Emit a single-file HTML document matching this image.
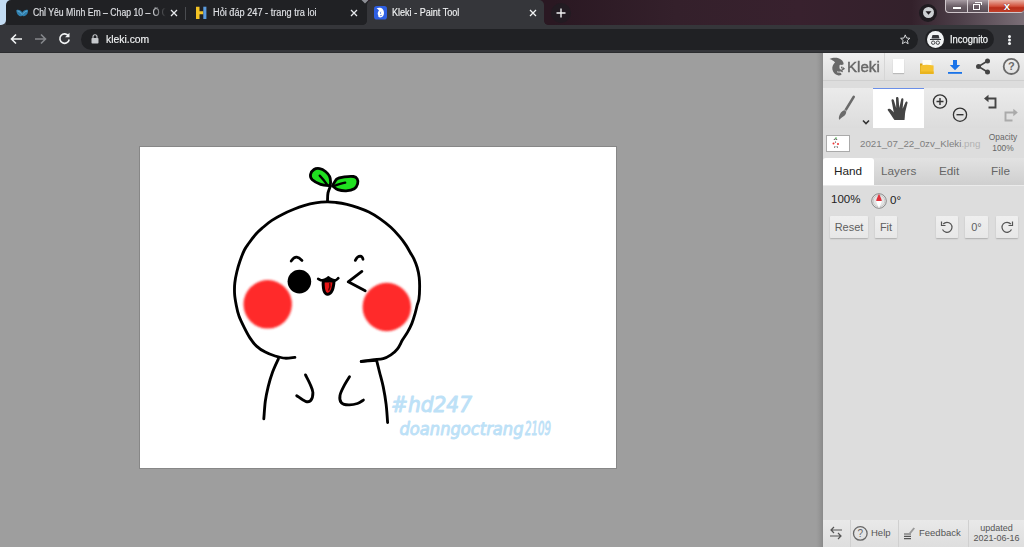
<!DOCTYPE html>
<html lang="en">
<head>
<meta charset="utf-8">
<title>Kleki - Paint Tool</title>
<style>
html,body{margin:0;padding:0;}
body{width:1024px;height:547px;overflow:hidden;position:relative;background:#9e9e9e;font-family:"Liberation Sans",sans-serif;}
.abs{position:absolute;}
#frame{left:0;top:0;width:1024px;height:26px;background:linear-gradient(90deg,#2a1822 0%,#2a1822 54%,#34202b 66%,#38212e 78%,#33212b 89%,#4f414b 94%,#7b6f77 100%);}
#blueback{left:0;top:0;width:12px;height:14px;background:#c3dcf3;}
#frameblue{left:0;top:0;width:6px;height:25px;background:#c3dcf3;border-radius:0 0 5px 0;}
#tabsdark{left:6px;top:0;width:362px;height:26px;background:#202124;border-radius:5px 0 0 0;}
#tabactive{left:367px;top:0;width:177px;height:26px;background:#35363a;border-radius:5px 5px 0 0;}
#flareL{left:363px;top:21px;width:4px;height:4px;background:radial-gradient(circle at 0 0,rgba(53,54,58,0) 3.500px,#35363a 4.200px);}
#flareR{left:544px;top:21px;width:4px;height:4px;background:radial-gradient(circle at 100% 0,rgba(53,54,58,0) 3.500px,#35363a 4.200px);}
#toolbar{left:0;top:25px;width:1024px;height:27px;background:#35363a;}
#tbcorner{left:0;top:15px;width:7px;height:11px;background:#35363a;}
#tbline{left:0;top:52px;width:1024px;height:1px;background:#2b2c2f;}
#omni{left:81px;top:29px;width:837px;height:21px;border-radius:11px;background:#202124;}
.tabtitle{font-size:10px;line-height:12px;color:#dfe1e5;top:7px;white-space:nowrap;transform-origin:0 0;-webkit-text-stroke:0.150px currentColor;}
.tabx{color:#e8eaed;font-size:9px;top:6px;}
#panel{left:823px;top:53px;width:201px;height:494px;background:#dddddd;}
#panelborder{left:816px;top:53px;width:7px;height:494px;background:linear-gradient(90deg,rgba(0,0,0,0),rgba(0,0,0,0.040) 40%,rgba(0,0,0,0.130));}
#hdr{left:823px;top:53px;width:201px;height:27px;background:linear-gradient(#f0f0f0,#dfdfdf);border-bottom:1px solid #cfcfcf;}
#toolrow{left:823px;top:88px;width:201px;height:40px;background:linear-gradient(#ebebeb,#dcdcdc);}
#handtile{left:873px;top:88px;width:51px;height:40px;background:#fff;border-top:1px solid #6b8fe8;box-sizing:border-box;}
#tabrow{left:823px;top:158px;width:201px;height:27px;background:linear-gradient(#e2e2e2,#cfcfcf);border-bottom:1px solid #ebebeb;}
#tabhand{left:823px;top:158px;width:51px;height:27px;background:#fff;border-radius:3px 3px 0 0;}
.ptab{font-size:11.75px;color:#666;top:164px;}
.btn{height:22px;top:216px;background:linear-gradient(#efefef,#e7e7e7);border-radius:1px;box-shadow:0 1px 1.500px rgba(0,0,0,0.220);font-size:11px;color:#5e5e5e;text-align:center;line-height:22px;}
#footer{left:823px;top:520px;width:201px;height:27px;background:linear-gradient(#e9e9e9,#dedede);}
.fsep{top:520px;width:1px;height:27px;background:#d0d0d0;}
.ftxt{font-size:9.5px;color:#555;}
#canvas{left:140px;top:147px;width:476px;height:321px;background:#fff;box-shadow:0 0 0 1px rgba(0,0,0,0.140);}
</style>
</head>
<body>
<!-- chrome frame -->
<div id="frame" class="abs"></div>
<div id="blueback" class="abs"></div>
<div id="tbcorner" class="abs"></div>
<div id="frameblue" class="abs"></div>
<div id="tabsdark" class="abs"></div>
<div id="tabactive" class="abs"></div>
<div id="flareL" class="abs"></div>
<div id="flareR" class="abs"></div>
<svg class="abs" style="left:361px;top:0" width="8" height="4" viewBox="0 0 8 4"><path d="M0.500 0 H7.500 L4 3.500Z" fill="#a9abb3" opacity="0.800"/></svg>
<div id="toolbar" class="abs"></div>
<div id="tbline" class="abs"></div>
<div id="omni" class="abs"></div>

<!-- tab 1 -->
<svg class="abs" style="left:15.500px;top:8.500px" width="12.500" height="8" viewBox="0 0 12.500 8"><path d="M0.300 1.200 C2.500 0.300 5 1.300 6.250 3.600 C7.500 1.300 10 0.300 12.200 1.200 C12 4.800 10 7.300 7.300 7.300 C6.800 7.300 6.500 7 6.250 6.600 C6 7 5.700 7.300 5.200 7.300 C2.500 7.300 0.500 4.800 0.300 1.200Z" fill="#2f7fae"/><path d="M1.500 2 C3.500 2.300 5 3.800 5.800 5.500 M11 2 C9 2.300 7.500 3.800 6.700 5.500" stroke="#6db5dc" stroke-width="0.900" fill="none"/></svg>
<div class="abs tabtitle" style="left:32.500px;width:154px;overflow:hidden;transform:scaleX(0.866);">Chỉ Yêu Mình Em – Chap 10 – Ổ Q</div>
<div class="abs" style="left:153px;top:4px;width:14px;height:18px;background:linear-gradient(90deg,rgba(32,33,36,0),#202124 90%);"></div>
<svg class="abs" style="left:170px;top:9px" width="8" height="8" viewBox="0 0 8 8"><path d="M1 1 L7 7 M7 1 L1 7" stroke="#e8eaed" stroke-width="1.3" fill="none"/></svg>
<div class="abs" style="left:185px;top:7px;width:1px;height:13px;background:#4a4c50;"></div>
<!-- tab 2 -->
<svg class="abs" style="left:195px;top:6px" width="13" height="14" viewBox="0 0 13 14"><path d="M1 0.700 H4.500 V5.300 H8.300 V8.300 H4.500 V13 H1Z" fill="#f3c324"/><path d="M8.300 0.700 H11.400 V13 H8.300Z" fill="#5b9bdf"/></svg>
<div class="abs tabtitle" style="left:212.500px;transform:scaleX(0.918);">Hỏi đáp 247 - trang tra loi</div>
<svg class="abs" style="left:350px;top:9px" width="8" height="8" viewBox="0 0 8 8"><path d="M1 1 L7 7 M7 1 L1 7" stroke="#e8eaed" stroke-width="1.3" fill="none"/></svg>
<!-- tab 3 active -->
<svg class="abs" style="left:373.500px;top:6px" width="13" height="13.500" viewBox="0 0 13 13.500"><rect x="0" y="0" width="13" height="13.500" rx="2.800" fill="#2e5fe3"/><path d="M2.500 2.300 C4.500 1.300 7.500 1.500 8.800 3.200 C10 4.800 10.300 7 9.700 8.800 C9.100 10.500 7.800 11.600 6.200 11.600 C4.800 11.600 4 10.600 4.300 9.600 C3.300 8.200 3.600 6 5 4.600 C4.400 3.600 3.500 2.800 2.500 2.300Z" fill="#fff"/><path d="M6.900 5.800 C6.300 6.500 6.300 7.500 6.900 8 M6 9.600 C6.800 9.900 7.500 9.700 7.900 9.200" stroke="#2e5fe3" stroke-width="0.700" fill="none"/></svg>
<div class="abs tabtitle" style="left:392px;color:#f1f3f4;transform:scaleX(0.906);">Kleki - Paint Tool</div>
<svg class="abs" style="left:529px;top:9px" width="8" height="8" viewBox="0 0 8 8"><path d="M1 1 L7 7 M7 1 L1 7" stroke="#f1f3f4" stroke-width="1.3" fill="none"/></svg>
<!-- new tab + -->
<div class="abs" style="left:551px;top:3px;width:20px;height:20px;border-radius:10px;background:#221b22;"></div>
<svg class="abs" style="left:556px;top:8px" width="10" height="10" viewBox="0 0 10 10"><path d="M5 0.5 V9.5 M0.5 5 H9.500" stroke="#f1f3f4" stroke-width="1.4" fill="none"/></svg>
<!-- tab search -->
<div class="abs" style="left:919px;top:4px;width:18px;height:18px;border-radius:9px;background:#1f1b20;"></div>
<div class="abs" style="left:923px;top:7px;width:11px;height:11px;border-radius:6px;background:#cdd0d3;"></div>
<svg class="abs" style="left:925px;top:11px" width="7" height="4" viewBox="0 0 7 4"><path d="M0.500 0.300 H6.500 L3.500 3.700Z" fill="#1f1b20"/></svg>
<!-- window buttons -->
<div class="abs" style="left:945px;top:0;width:79px;height:13px;border-radius:0 0 4px 4px;border:1px solid #cfc6cb;border-top:none;border-right:none;box-sizing:border-box;background:linear-gradient(#a79ca3,#6e626a 50%,#5a4e57);overflow:hidden;">
  <div class="abs" style="left:21px;top:0;width:1px;height:14px;background:#d6cfd3;"></div>
  <div class="abs" style="left:42px;top:0;width:1px;height:14px;background:#d6cfd3;"></div>
  <div class="abs" style="left:43px;top:0;width:36px;height:14px;background:linear-gradient(#e9b3a6,#d2513c 45%,#b92d19 55%,#c64a33);"></div>
  <div class="abs" style="left:7px;top:6.500px;width:8px;height:2.500px;background:#fff;box-shadow:0 0 1px #333;"></div>
  <div class="abs" style="left:27px;top:3.500px;width:7px;height:6.500px;border:1.500px solid #fff;box-sizing:border-box;box-shadow:0 0 1px #333;"></div>
  <div class="abs" style="left:29px;top:1.500px;width:7px;height:3px;border:1px solid #fff;border-bottom:none;border-left:none;box-sizing:border-box;"></div>
  <div class="abs" style="left:54px;top:-1.500px;width:14px;height:14px;color:#fff;font-size:11.500px;font-weight:bold;line-height:14px;text-align:center;text-shadow:0 0 1px #400;">x</div>
</div>

<!-- toolbar icons -->
<svg class="abs" style="left:10px;top:33px" width="13" height="12" viewBox="0 0 13 12"><path d="M12 6 H2 M6 1.500 L1.500 6 L6 10.500" stroke="#f1f3f4" stroke-width="1.6" fill="none"/></svg>
<svg class="abs" style="left:34px;top:33px" width="13" height="12" viewBox="0 0 13 12"><path d="M1 6 H11 M7 1.500 L11.500 6 L7 10.500" stroke="#85878b" stroke-width="1.6" fill="none"/></svg>
<svg class="abs" style="left:58px;top:32px" width="13" height="13" viewBox="0 0 13 13"><path d="M10.500 4 A4.700 4.700 0 1 0 11.200 7.500" stroke="#f1f3f4" stroke-width="1.6" fill="none"/><path d="M11.500 0.800 V5.200 H7.100Z" fill="#f1f3f4"/></svg>
<svg class="abs" style="left:91px;top:34px" width="8" height="10" viewBox="0 0 8 10"><rect x="0.500" y="4" width="7" height="5.500" rx="0.800" fill="#c6c9cc"/><path d="M2 4 V2.800 A2 2 0 0 1 6 2.800 V4" stroke="#c6c9cc" stroke-width="1.100" fill="none"/></svg>
<div class="abs" style="left:106px;top:32.500px;font-size:11.300px;line-height:13px;color:#f1f3f4;transform-origin:0 0;transform:scaleX(0.918);-webkit-text-stroke:0.150px #f1f3f4;">kleki.com</div>
<svg class="abs" style="left:900px;top:34.300px" width="10.500" height="10.500" viewBox="0 0 12 12"><path d="M6 1 L7.500 4.600 L11.300 4.900 L8.400 7.400 L9.300 11.100 L6 9.100 L2.700 11.100 L3.600 7.400 L0.700 4.900 L4.500 4.600Z" stroke="#e8eaed" stroke-width="1" fill="none" stroke-linejoin="round"/></svg>
<div class="abs" style="left:925px;top:29px;width:69px;height:20px;border-radius:11px;background:#202124;"></div>
<div class="abs" style="left:927px;top:31px;width:17px;height:17px;border-radius:9px;background:#f1f3f4;"></div>
<svg class="abs" style="left:929px;top:34px" width="13" height="12" viewBox="0 0 13 12"><path d="M3.500 1 H9.500 L10.500 4.500 H2.500Z M1 5 H12 V6 H1Z" fill="#35363a"/><circle cx="4.200" cy="8.700" r="1.700" stroke="#35363a" stroke-width="0.900" fill="none"/><circle cx="8.800" cy="8.700" r="1.700" stroke="#35363a" stroke-width="0.900" fill="none"/></svg>
<div class="abs" style="left:949.500px;top:33.500px;font-size:10px;line-height:12px;color:#f1f3f4;transform-origin:0 0;transform:scaleX(0.937);-webkit-text-stroke:0.250px #f1f3f4;">Incognito</div>
<div class="abs" style="left:1008px;top:35px;width:3px;height:3px;border-radius:2px;background:#f1f3f4;box-shadow:0 3.500px 0 #f1f3f4,0 7px 0 #f1f3f4;"></div>

<!-- canvas area -->
<div id="canvas" class="abs"></div>
<svg class="abs" style="left:140px;top:147px" width="476" height="320" viewBox="140 147 476 320">
<defs><filter id="blur" x="-20%" y="-20%" width="140%" height="140%"><feGaussianBlur stdDeviation="1.300"/></filter></defs>
<!-- cheeks -->
<circle cx="267.700" cy="304.300" r="24.200" fill="#ff2a2a" filter="url(#blur)"/>
<circle cx="386.800" cy="307" r="24.200" fill="#ff2a2a" filter="url(#blur)"/>
<g fill="none" stroke="#000" stroke-width="2.850" stroke-linecap="round" stroke-linejoin="round">
<!-- head -->
<path d="M294.9 357.4 C293.2 357.5 288.3 358.4 285.0 358.2 C281.7 358.0 278.4 357.0 275.1 356.0 C271.8 355.0 268.4 353.8 265.3 352.1 C262.2 350.5 259.1 348.5 256.5 346.1 C253.9 343.7 252.0 341.1 249.9 337.9 C247.8 334.7 245.7 330.5 243.9 326.9 C242.1 323.2 240.3 319.6 239.0 316.0 C237.7 312.4 236.9 308.7 236.2 305.0 C235.5 301.3 234.8 297.7 234.6 294.0 C234.4 290.3 234.4 286.7 234.8 283.0 C235.2 279.3 235.9 275.7 236.8 272.0 C237.7 268.3 238.7 264.7 240.0 261.0 C241.3 257.3 242.9 253.0 244.4 250.0 C245.9 247.0 247.1 245.7 249.0 243.0 C250.9 240.3 253.6 236.7 256.0 234.0 C258.4 231.3 260.9 229.3 263.5 227.0 C266.1 224.7 268.7 222.5 271.9 220.4 C275.1 218.3 279.1 216.0 282.8 214.2 C286.5 212.3 290.1 210.8 293.8 209.3 C297.5 207.8 301.2 206.5 304.8 205.4 C308.4 204.3 312.0 203.5 315.7 202.9 C319.4 202.3 323.6 202.0 327.0 201.9 C330.4 201.8 332.7 202.1 336.0 202.5 C339.3 202.9 343.2 203.5 346.9 204.3 C350.5 205.2 354.2 206.3 357.9 207.6 C361.6 208.9 365.2 210.2 368.9 212.0 C372.5 213.8 376.1 216.0 379.8 218.6 C383.5 221.2 387.5 224.3 390.8 227.3 C394.1 230.3 397.1 233.7 399.6 236.7 C402.2 239.7 404.3 242.7 406.1 245.4 C407.9 248.1 409.2 250.8 410.5 253.0 C411.8 255.2 412.8 256.4 413.9 258.8 C415.0 261.2 416.3 264.4 417.2 267.5 C418.1 270.6 418.8 273.9 419.2 277.4 C419.6 280.9 419.7 284.8 419.6 288.4 C419.6 292.0 419.3 296.5 418.9 299.3 C418.5 302.1 417.8 302.6 417.2 305.0 C416.6 307.4 415.9 310.7 415.0 313.8 C414.1 316.9 413.1 320.5 411.8 323.6 C410.5 326.7 409.0 329.6 407.4 332.4 C405.8 335.1 404.0 337.4 402.4 340.1 C400.8 342.9 399.4 346.4 397.5 348.9 C395.6 351.4 393.3 353.3 390.9 354.9 C388.5 356.5 386.3 357.9 383.2 358.7 C380.1 359.5 375.9 359.3 372.3 359.8 C368.7 360.3 363.1 361.2 361.3 361.5"/>
<!-- body -->
<path d="M278.4 358.8 C277.4 361.0 274.3 367.4 272.6 372.0 C270.9 376.6 269.4 381.7 268.2 386.6 C267.0 391.5 266.0 395.9 265.3 401.3 C264.6 406.7 264.1 415.9 263.8 418.8"/>
<path d="M361.200 361.400 L376.600 360.300"/>
<path d="M376.6 360.3 C377.1 362.2 378.4 367.6 379.5 372.0 C380.6 376.4 382.1 381.2 383.2 386.6 C384.3 392.0 385.4 398.2 386.1 404.2 C386.8 410.2 387.4 419.4 387.6 422.5"/>
<path d="M305.5 374.9 C306.2 376.4 308.7 380.8 309.9 383.7 C311.1 386.6 312.8 389.7 312.9 392.5 C313.0 395.3 311.9 399.0 310.7 400.5 C309.5 402.0 307.8 402.1 305.5 401.3 C303.2 400.5 298.2 396.6 296.7 395.7"/>
<path d="M349.5 376.7 C348.6 378.1 346.0 382.1 344.4 385.2 C342.8 388.3 340.5 392.5 340.0 395.4 C339.5 398.3 339.9 401.1 341.4 402.7 C342.8 404.3 346.0 404.8 348.7 404.9 C351.4 405.0 355.1 404.3 357.5 403.5 C359.9 402.7 362.4 400.7 363.4 400.1"/>
<!-- stem -->
<path d="M330.4 186.3 C330.0 187.4 328.5 190.5 328.0 192.9 C327.5 195.3 327.6 199.7 327.5 201.0"/>
</g>
<!-- leaves -->
<g stroke="#000" stroke-width="2.800" stroke-linejoin="round" fill="#20e020">
<path d="M330.0 185.8 C328.4 185.6 323.6 185.3 320.6 184.3 C317.7 183.3 314.0 181.3 312.3 179.7 C310.6 178.0 310.2 176.1 310.5 174.4 C310.8 172.7 312.5 170.5 314.0 169.5 C315.5 168.5 317.8 168.3 319.7 168.6 C321.6 168.9 323.9 170.2 325.5 171.5 C327.1 172.8 328.8 174.7 329.6 176.5 C330.5 178.3 330.5 180.6 330.6 182.2 C330.7 183.8 330.1 185.2 330.0 185.8Z"/>
<path d="M332.5 185.8 C333.2 184.7 335.0 180.4 337.0 178.9 C339.0 177.4 341.6 177.3 344.4 176.9 C347.1 176.5 351.4 176.2 353.5 176.5 C355.6 176.8 356.5 177.7 357.2 178.9 C357.9 180.1 358.1 182.2 357.6 183.9 C357.1 185.6 356.2 187.7 354.3 188.8 C352.4 190.0 348.9 190.7 346.1 190.8 C343.4 190.9 340.1 190.4 337.8 189.6 C335.5 188.8 333.4 186.4 332.5 185.8Z"/>
</g>
<g fill="none" stroke="#000" stroke-width="2.300" stroke-linecap="round">
<path d="M319.700 175.600 C322 178 325 181.500 327.100 184.700"/>
<path d="M333.500 186.200 C337 184.800 341 183.200 345.200 182.600"/>
</g>
<!-- face -->
<g fill="none" stroke="#000" stroke-width="2.800" stroke-linecap="round" stroke-linejoin="round">
<path d="M291.200 261 C293 258.500 295 257 296.700 257.200 C298.500 257.500 300.500 259 302 260.400"/>
<path d="M355.300 260.400 C356.500 258 358.500 256.200 360.200 256.200 C361.800 256.300 362.700 257.800 363 259.300"/>
<path d="M361.900 271.400 L348.200 281.800 L365.200 290.800"/>
</g>
<circle cx="299.400" cy="281.600" r="11.800" fill="#000"/>
<path d="M323.3 280.4 C323.3 281.2 323.1 283.4 323.2 285.0 C323.3 286.6 323.5 288.9 323.9 290.3 C324.3 291.7 325.0 292.8 325.7 293.5 C326.4 294.2 327.1 294.4 327.9 294.3 C328.6 294.2 329.4 293.9 330.2 293.2 C330.9 292.5 331.8 291.3 332.4 289.9 C333.0 288.5 333.3 286.5 333.6 285.0 C333.9 283.5 333.9 281.4 334.0 280.7Z" fill="#e61616" stroke="#000" stroke-width="3" stroke-linejoin="round"/>
<path d="M322.500 280.500 L326.200 278.700 L328.400 277.500 L330.600 278.700 L334.500 280.700 L334 282.300 L323 282.300Z" fill="#000"/>
<path d="M329.800 283.500 C330.200 285.500 329.800 288 328.800 290" stroke="#5a0000" stroke-width="1.500" stroke-linecap="round" fill="none"/>
<g fill="none" stroke="#000" stroke-width="2.700" stroke-linecap="round" stroke-linejoin="round">
<path d="M318.2 278.9 C318.6 279.1 319.8 280.0 320.7 280.2 C321.6 280.4 322.6 280.2 323.5 280.0 C324.4 279.8 325.4 279.3 326.2 278.9 C327.0 278.5 328.0 277.8 328.4 277.6"/>
<path d="M328.4 277.6 C328.8 277.8 329.8 278.5 330.6 278.9 C331.4 279.3 332.1 279.8 333.0 280.0 C333.9 280.2 334.8 280.5 335.7 280.2 C336.6 279.9 337.9 278.5 338.3 278.2"/>
</g>
<!-- handwritten tag -->
<g font-family="'DejaVu Sans Condensed','DejaVu Sans','Liberation Sans',sans-serif" font-style="italic" fill="#bde1f7" stroke="#bde1f7" stroke-width="0.900" stroke-linejoin="round">
<text x="391" y="411.500" font-size="21" textLength="81" lengthAdjust="spacingAndGlyphs">#hd247</text>
<text x="399.500" y="434.500" font-size="18" textLength="124" lengthAdjust="spacingAndGlyphs">doanngoctrang</text>
<text x="525" y="434.500" font-size="19" textLength="26" lengthAdjust="spacingAndGlyphs">2109</text>
</g>
</svg>

<!-- panel -->
<div id="panelborder" class="abs"></div>
<div id="panel" class="abs"></div>
<div id="hdr" class="abs"></div>
<div id="toolrow" class="abs"></div>
<div id="handtile" class="abs"></div>
<div id="tabrow" class="abs"></div>
<div id="tabhand" class="abs"></div>
<div id="footer" class="abs"></div>

<!-- header: logo -->
<svg class="abs" style="left:829px;top:57px" width="17" height="19.500" viewBox="0 0 17 19.500"><path d="M0.500 2 C3 0.800 6.500 0.500 9.500 1.200 C12.500 2 14.600 4.500 14.700 7.200 C13.600 7.500 12.600 8.200 12.300 9.300 C13.600 9.600 15.200 10.600 16 11.800 C15.200 12.600 14.300 13 13.400 13.200 C13.900 13.800 14 14.600 13.700 15.200 C12.600 15 11.300 14.800 10.200 15 C11.400 15.600 12.400 16.500 12.600 17.600 C11.600 18.400 10 18.700 8.800 18.300 C6 17.600 4 15.200 3.400 12.500 C2.900 9.800 4 7.200 6 5.400 C4.800 4 2.800 2.600 0.500 2Z" fill="#686868"/><path d="M10.800 8.200 C11.800 7.600 13 7.800 13.400 8.800 C13.800 10 13.600 11.600 12.800 12.600 C11.800 12.800 10.800 12.200 10.500 11 C10.300 10 10.400 9 10.800 8.200Z" fill="#e6e6e6"/><ellipse cx="12.600" cy="10.400" rx="0.650" ry="1" fill="#686868"/><path d="M8 14.800 C9.500 15.300 11 15.200 12.200 14.600" stroke="#e6e6e6" stroke-width="0.900" fill="none"/></svg>
<div class="abs" style="left:846.800px;top:57px;font-size:15.200px;color:#686868;line-height:20px;transform-origin:0 0;transform:scaleX(0.995);-webkit-text-stroke:0.450px #686868;">Kleki</div>
<div class="abs" style="left:884px;top:53px;width:1px;height:27px;background:#d6d6d6;"></div>
<!-- new -->
<div class="abs" style="left:893px;top:59px;width:11px;height:14px;background:#fff;box-shadow:0 1px 1px rgba(0,0,0,0.18);"></div>
<!-- folder -->
<svg class="abs" style="left:919px;top:59px" width="16" height="16" viewBox="0 0 16 16"><path d="M1 4.500 H4.500 V14.500 H1Z" fill="#d6a312"/><path d="M3.500 1 H12.500 V9 H3.500Z" fill="#fffdf2"/><path d="M1.500 6.500 C5 5.600 10 5.600 14.600 6.500 V14.800 H1.500Z" fill="#f5c22e"/><path d="M1 12.500 H14.600 V15 H1Z" fill="#e9b41e"/></svg>
<!-- download -->
<svg class="abs" style="left:947px;top:59px" width="16" height="16" viewBox="0 0 16 16"><path d="M6 1 H10 V6 H13.200 L8 11.300 L2.800 6 H6Z" fill="#1a73e8"/><rect x="1" y="13" width="14" height="1.800" fill="#1a73e8"/></svg>
<!-- share -->
<svg class="abs" style="left:975px;top:58px" width="16" height="17" viewBox="0 0 16 17"><path d="M12.500 3 L3.500 8.500 L12.500 14" stroke="#444" stroke-width="1.600" fill="none"/><circle cx="12.500" cy="3" r="2.500" fill="#444"/><circle cx="3.500" cy="8.500" r="2.500" fill="#444"/><circle cx="12.500" cy="14" r="2.500" fill="#444"/></svg>
<!-- help -->
<svg class="abs" style="left:1002px;top:57px" width="19" height="19" viewBox="0 0 19 19"><circle cx="9.300" cy="9.400" r="7.600" stroke="#6a6a6a" stroke-width="1.800" fill="none"/><text x="9.300" y="13.400" font-family="Liberation Sans, sans-serif" font-size="11" font-weight="bold" fill="#6a6a6a" text-anchor="middle">?</text></svg>

<!-- tool row: brush -->
<svg class="abs" style="left:836px;top:94px" width="22" height="28" viewBox="0 0 22 28"><path d="M17.700 2.800 L9.600 16.200" stroke="#6a6a6a" stroke-width="2.600" stroke-linecap="round" fill="none"/><path d="M8 16.300 L10.300 17.700 C10 20.500 8.300 22.200 6.200 23.200 C4.800 24 4.200 25 3.600 25.800 C2.600 25.300 2.700 23.600 3.200 22 C3.900 19.600 5.600 17.300 8 16.300Z" fill="#6a6a6a"/><path d="M8.300 15.600 L10.800 17.100" stroke="#bbb" stroke-width="0.800"/></svg>
<svg class="abs" style="left:861px;top:118.500px" width="10" height="7" viewBox="0 0 10 7"><path d="M2 1.500 L5 4.500 L8 1.500" stroke="#333" stroke-width="1.600" fill="none"/></svg>
<!-- hand -->
<svg class="abs" style="left:887px;top:96px" width="22" height="25" viewBox="0 0 22 25"><path d="M7.500 24 C6 22 3.500 17.500 0.800 14.200 C0.300 13.300 1.200 12.300 2.500 12.800 C4 13.400 5.500 15 6.800 16.500 L4.500 4.500 C4.300 3 6.300 2.600 6.800 4 L9.200 12 L9 2 C9 0.500 11.300 0.500 11.500 2 L12.300 12 L14.200 3.200 C14.500 1.800 16.600 2.200 16.400 3.700 L15.600 12.800 L18.500 6.200 C19.100 5 20.900 5.700 20.500 7 C19.500 11 18.300 15 18 18 C17.800 20.500 17.800 22 17.500 24Z" fill="#444"/></svg>
<!-- zoom in / out -->
<svg class="abs" style="left:931px;top:93px" width="18" height="18" viewBox="0 0 18 18"><circle cx="9" cy="8.500" r="6.600" stroke="#333" stroke-width="1.300" fill="none"/><path d="M5.500 8.500 H12.500 M9 5 V12" stroke="#333" stroke-width="1.400" fill="none"/></svg>
<svg class="abs" style="left:951px;top:106px" width="18" height="18" viewBox="0 0 18 18"><circle cx="9" cy="8.700" r="6.600" stroke="#333" stroke-width="1.300" fill="none"/><path d="M5.500 8.700 H12.500" stroke="#333" stroke-width="1.400" fill="none"/></svg>
<!-- undo / redo -->
<svg class="abs" style="left:983px;top:94px" width="16" height="16" viewBox="0 0 16 16"><path d="M4 4.500 H12.500 V13.500 H5.500" stroke="#444" stroke-width="1.900" fill="none"/><path d="M1 4.500 L5.500 0.800 V8.200Z" fill="#444"/></svg>
<svg class="abs" style="left:1003px;top:107px" width="16" height="16" viewBox="0 0 16 16"><path d="M12 5.500 H2.500 V13.500 H9.500" stroke="#aaa" stroke-width="1.900" fill="none"/><path d="M14.800 5.500 L10.300 1.800 V9.200Z" fill="#aaa"/></svg>

<!-- file row -->
<div class="abs" style="left:826px;top:135px;width:24px;height:17px;background:#fff;border:1px solid #aaa;box-sizing:border-box;"></div>
<svg class="abs" style="left:826px;top:135px" width="24" height="17" viewBox="0 0 24 17"><path d="M8 5 C8 3.500 11 3.500 11 5" stroke="#222" stroke-width="0.800" fill="none"/><circle cx="7.500" cy="8.500" r="1" fill="#e33"/><circle cx="12" cy="9" r="1" fill="#e33"/><circle cx="9.500" cy="7" r="0.600" fill="#222"/><path d="M9 11 L8.500 13 M11 11 L11.500 13" stroke="#222" stroke-width="0.600"/><circle cx="10" cy="3" r="0.700" fill="#2a2"/></svg>
<div class="abs" style="left:860px;top:138px;font-size:9.750px;color:#808080;white-space:nowrap;">2021_07_22_0zv_Kleki<span style="color:#b3b3b3">.png</span></div>
<div class="abs" style="left:983px;top:132px;width:40px;text-align:center;font-size:8.400px;line-height:10.500px;color:#666;">Opacity<br>100%</div>

<!-- tabs -->
<div class="abs ptab" style="left:834px;color:#222;">Hand</div>
<div class="abs ptab" style="left:881px;">Layers</div>
<div class="abs ptab" style="left:939px;">Edit</div>
<div class="abs ptab" style="left:991px;">File</div>

<!-- hand controls -->
<div class="abs" style="left:831px;top:193px;font-size:11.500px;color:#222;">100%</div>
<svg class="abs" style="left:870px;top:192px" width="18" height="18" viewBox="0 0 18 18"><circle cx="9" cy="9" r="7.300" fill="#e4e4e4" stroke="#8a8a8a" stroke-width="1"/><circle cx="9" cy="9" r="5.800" fill="none" stroke="#c4c4c4" stroke-width="0.800"/><path d="M9 1.800 C10 4 11.600 7 11.800 9 H6.200 C6.400 7 8 4 9 1.800Z" fill="#e0303a"/><path d="M9 16.200 C9.800 14 11.600 11 11.800 9 H6.200 C6.400 11 8.200 14 9 16.200Z" fill="#fff"/></svg>
<div class="abs" style="left:890px;top:193px;font-size:11.600px;color:#222;">0°</div>
<div class="abs btn" style="left:830px;width:38px;">Reset</div>
<div class="abs btn" style="left:875px;width:22px;">Fit</div>
<div class="abs btn" style="left:936px;width:22px;"></div>
<div class="abs btn" style="left:965px;width:23px;">0°</div>
<div class="abs btn" style="left:996px;width:22px;"></div>
<svg class="abs" style="left:940px;top:220px" width="14" height="14" viewBox="0 0 14 14"><path d="M3.200 4 A5 5 0 1 1 2.500 9.500" stroke="#555" stroke-width="1.200" fill="none"/><path d="M1.500 1.500 V5.500 H5.500" stroke="#555" stroke-width="1.200" fill="none"/></svg>
<svg class="abs" style="left:1000px;top:220px" width="14" height="14" viewBox="0 0 14 14"><path d="M10.800 4 A5 5 0 1 0 11.500 9.500" stroke="#555" stroke-width="1.200" fill="none"/><path d="M12.500 1.500 V5.500 H8.500" stroke="#555" stroke-width="1.200" fill="none"/></svg>

<!-- footer -->
<div class="abs fsep" style="left:850px;"></div>
<div class="abs fsep" style="left:898px;"></div>
<div class="abs fsep" style="left:968px;"></div>
<svg class="abs" style="left:829px;top:526px" width="14" height="14" viewBox="0 0 14 14"><path d="M13 4 H2 M5 1 L2 4 L5 7" stroke="#555" stroke-width="1.200" fill="none"/><path d="M1 10 H12 M9 7 L12 10 L9 13" stroke="#555" stroke-width="1.200" fill="none"/></svg>
<svg class="abs" style="left:852px;top:525px" width="17" height="17" viewBox="0 0 17 17"><circle cx="8.300" cy="8.400" r="6.800" stroke="#666" stroke-width="1.300" fill="none"/><text x="8.300" y="12" font-family="Liberation Sans, sans-serif" font-size="10" fill="#666" text-anchor="middle">?</text></svg>
<div class="abs ftxt" style="left:871px;top:527px;">Help</div>
<svg class="abs" style="left:903px;top:526px" width="13" height="14" viewBox="0 0 13 14"><path d="M1 8 H8 M1 10.300 H8 M1 12.600 H8" stroke="#555" stroke-width="1.200"/><path d="M6 7 L10.500 1.500 L12 2.500 L7.500 8Z" fill="#999"/></svg>
<div class="abs ftxt" style="left:919px;top:527px;">Feedback</div>
<div class="abs ftxt" style="left:969px;top:523px;width:55px;text-align:center;line-height:10.300px;font-size:9px;">updated<br>2021-06-16</div>

</body>
</html>
